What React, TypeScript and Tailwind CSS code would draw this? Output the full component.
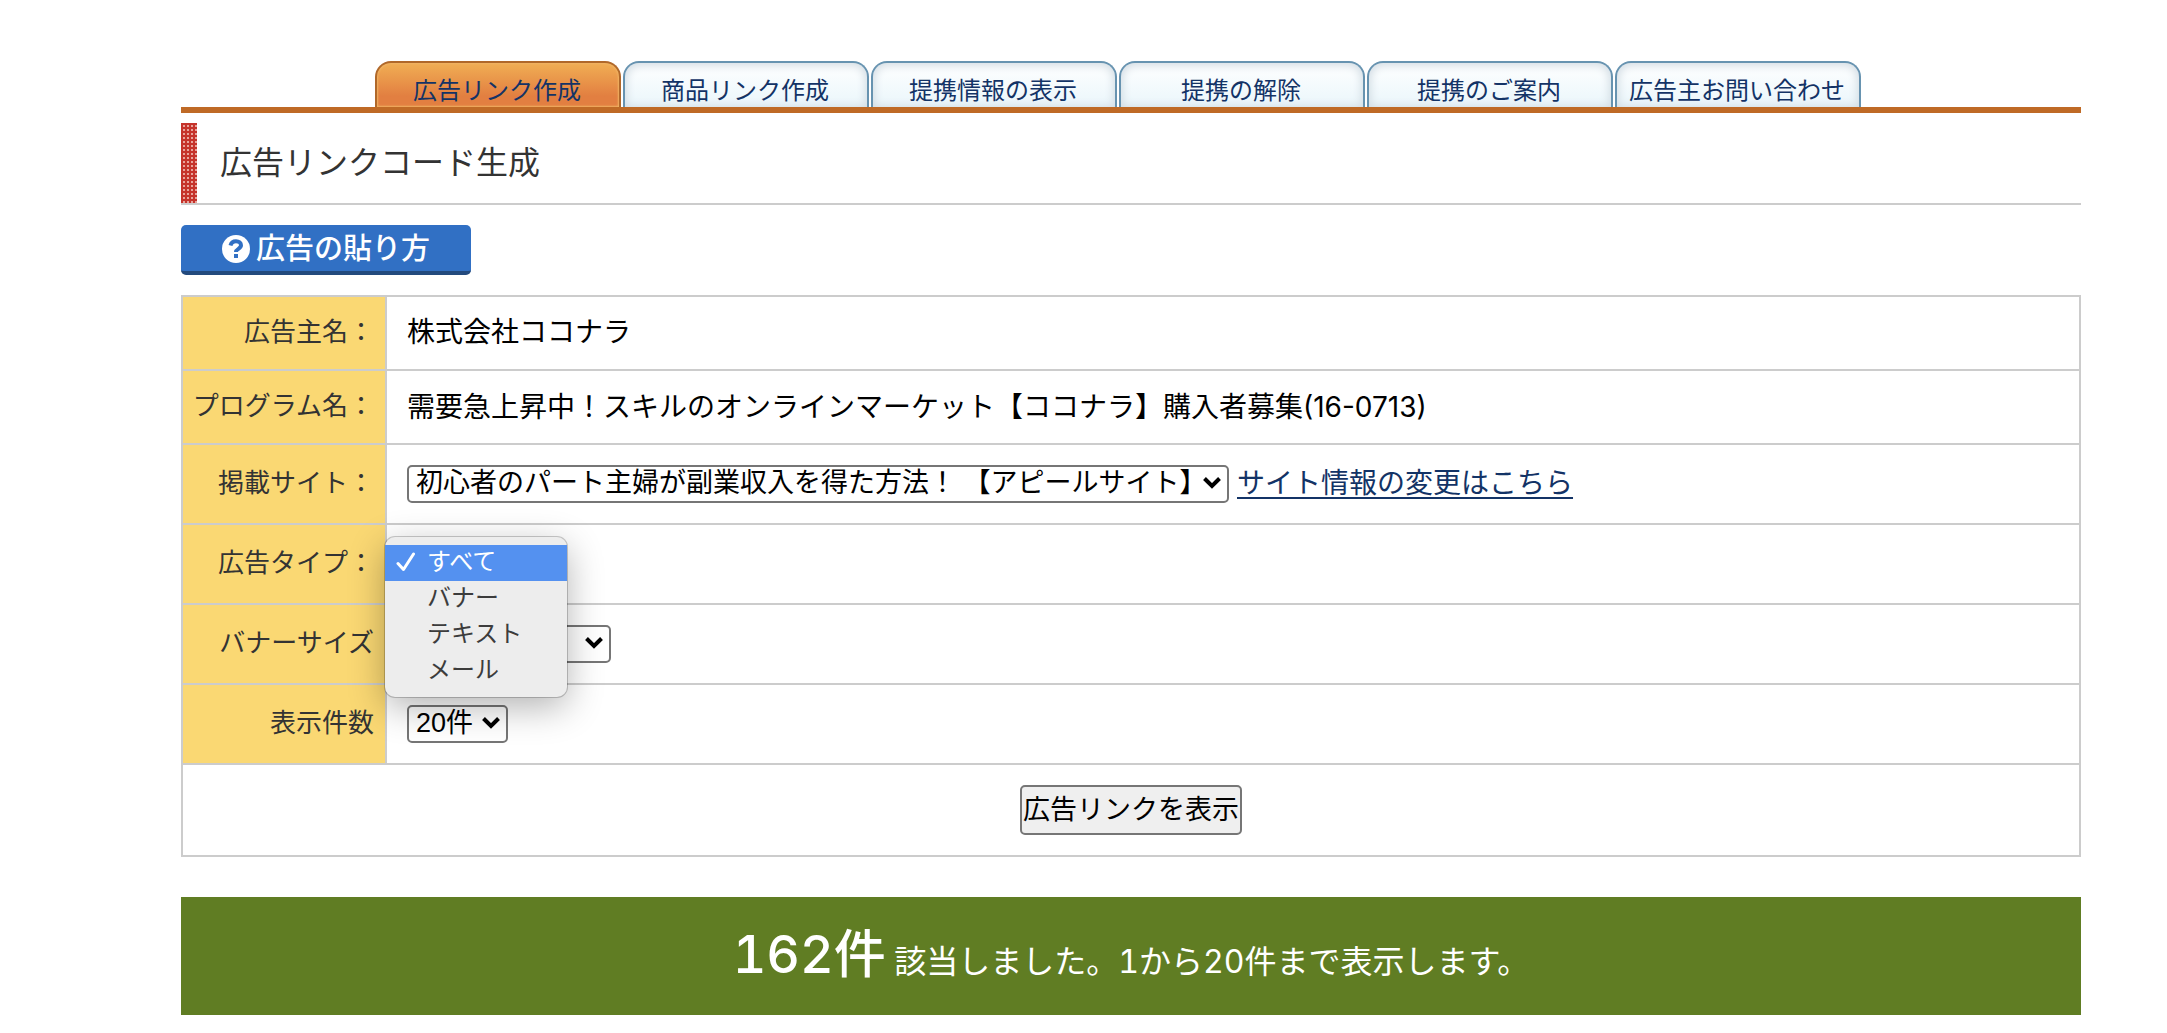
import { useState, type ReactNode } from "react";

const tabs = [
  "広告リンク作成",
  "商品リンク作成",
  "提携情報の表示",
  "提携の解除",
  "提携のご案内",
  "広告主お問い合わせ",
];

const adTypes = ["すべて", "バナー", "テキスト", "メール"];

function Tab({ label, active }: { label: string; active: boolean }) {
  const look = active
    ? "border-[#b0682a] bg-linear-to-b from-[#f0ae54] to-[#e27f41] to-75% shadow-[inset_0_0_2px_1px_#f0b464]"
    : "border-[#6793b0] bg-linear-to-b from-white to-[#eaf6fb] shadow-[inset_0_1px_8px_2px_#d3dde4]";
  return (
    <a
      href="#"
      aria-current={active ? "page" : undefined}
      className={`flex h-[46px] w-[246px] items-end justify-center rounded-t-[16px] border-2 border-b-0 pr-0.5 pb-1 text-[24px] leading-6 whitespace-nowrap text-[#133366] ${look}`}
    >
      {label}
    </a>
  );
}

function Select({
  id,
  options,
  className = "",
}: {
  id: string;
  options: string[];
  className?: string;
}) {
  return (
    <span className={`relative inline-flex ${className}`}>
      <select
        id={id}
        className="h-[38px] w-full appearance-none rounded-[5px] border-2 border-[#767676] bg-white pr-8 pb-0.5 pl-[7px] text-[27px] leading-8 text-black"
      >
        {options.map((o) => (
          <option key={o}>{o}</option>
        ))}
      </select>
      <svg
        aria-hidden="true"
        viewBox="0 0 18 12"
        className="pointer-events-none absolute top-3 right-2 h-3 w-[18px]"
      >
        <path d="M1.5 1.5 9 9l7.5-7.5" fill="none" stroke="#000" strokeWidth="4" />
      </svg>
    </span>
  );
}

function Row({
  label,
  htmlFor,
  tall,
  children,
}: {
  label: string;
  htmlFor?: string;
  tall?: boolean;
  children: ReactNode;
}) {
  return (
    <tr className={tall ? "h-20" : "h-[74px]"}>
      <th
        scope="row"
        className="w-[204px] border-2 border-[#cccccc] bg-[#fad873] pr-[11px] pb-0.5 text-right text-[26px] leading-9 font-normal whitespace-nowrap text-[#333333]"
      >
        {htmlFor ? <label htmlFor={htmlFor}>{label}</label> : label}
      </th>
      <td className="relative border-2 border-[#cccccc] px-5 text-[28px] leading-9 text-black">{children}</td>
    </tr>
  );
}

function AdTypeMenu() {
  const [selected, setSelected] = useState(0);
  return (
    <ul
      role="listbox"
      aria-label="広告タイプ"
      className="absolute top-3 -left-0.5 z-10 w-[182px] rounded-[10px] bg-[#ededed] pt-2 pb-2 shadow-[0_0_0_1px_rgba(0,0,0,0.2),0_10px_36px_rgba(0,0,0,0.3)]"
    >
      {adTypes.map((type, i) => (
        <li key={type} role="option" aria-selected={i === selected}>
          <button
            type="button"
            onClick={() => setSelected(i)}
            className={`flex h-9 w-full items-center pb-0.5 text-[24px] leading-8 ${
              i === selected ? "bg-[#5491f0] text-white" : "text-[#3c3c3c]"
            }`}
          >
            <span className="flex w-[42px] shrink-0 justify-center">
              {i === selected && (
                <svg aria-hidden="true" viewBox="0 0 20 20" className="h-5 w-5">
                  <path
                    d="M2 11.5 7.5 17.5 17.5 2"
                    fill="none"
                    stroke="#fff"
                    strokeWidth="3"
                    strokeLinecap="round"
                    strokeLinejoin="round"
                  />
                </svg>
              )}
            </span>
            {type}
          </button>
        </li>
      ))}
    </ul>
  );
}

export default function App() {
  return (
    <div className="bg-white pt-[61px] pr-[86px] pb-4 pl-[181px] font-['Liberation_Sans','Noto_Sans_CJK_JP',sans-serif]">
      <nav className="flex gap-0.5 border-b-6 border-[#bf6a26] pl-[194px]">
        {tabs.map((t, i) => (
          <Tab key={t} label={t} active={i === 0} />
        ))}
      </nav>

      <header className="mt-2.5 flex h-[82px] border-b-2 border-[#cccccc]">
        <span className="w-4 bg-[#c5332b] bg-[linear-gradient(#c5332b_2px,transparent_2px),linear-gradient(90deg,#c5332b_2px,#e8a49c_2px)] bg-size-[4px_4px]" />
        <h1 className="self-center pl-[23px] text-[32px] leading-10 text-[#333333]">広告リンクコード生成</h1>
      </header>

      <button
        type="button"
        className="mt-5 flex h-[50px] w-[290px] items-center justify-center gap-1.5 rounded-[5px] border-b-4 border-[#234a7d] bg-[#3170c4] pt-0.5 text-[29px] leading-9 font-medium text-white"
      >
        <svg aria-hidden="true" viewBox="0 0 28 28" className="h-7 w-7">
          <circle cx="14" cy="14" r="14" fill="#fff" />
          <path
            d="M8.5 10.5c.7-3 2.7-4.3 5.5-4.3 3 0 5 1.7 5 4.1 0 3.6-5 3.4-5 6.7"
            fill="none"
            stroke="#3170c4"
            strokeWidth="4"
          />
          <rect x="12" y="19" width="4" height="4" fill="#3170c4" />
        </svg>
        広告の貼り方
      </button>

      <form onSubmit={(e) => e.preventDefault()}>
        <table className="mt-5 w-full border-collapse">
          <tbody>
            <Row label="広告主名：">株式会社ココナラ</Row>
            <Row label="プログラム名：">
              <span className="font-['Inter','Noto_Sans_CJK_JP',sans-serif]">
                需要急上昇中！スキルのオンラインマーケット【ココナラ】購入者募集(16-0713)
              </span>
            </Row>
            <Row label="掲載サイト：" htmlFor="site" tall>
              <div className="flex items-center gap-2">
                <Select
                  id="site"
                  className="w-[822px]"
                  options={["初心者のパート主婦が副業収入を得た方法！ 【アピールサイト】"]}
                />
                <a href="#" className="text-[#133366] underline decoration-2 underline-offset-4">
                  サイト情報の変更はこちら
                </a>
              </div>
            </Row>
            <Row label="広告タイプ：" htmlFor="type" tall>
              <div className="flex">
                <Select id="type" options={adTypes} />
              </div>
              <AdTypeMenu />
            </Row>
            <Row label="バナーサイズ" htmlFor="size" tall>
              <div className="flex">
                <Select id="size" className="w-[204px]" options={["すべて"]} />
              </div>
            </Row>
            <Row label="表示件数" htmlFor="count" tall>
              <div className="flex">
                <Select id="count" options={["20件"]} />
              </div>
            </Row>
            <tr className="h-[92px]">
              <td colSpan={2} className="border-2 border-[#cccccc] text-center">
                <button
                  type="submit"
                  className="h-[50px] rounded-[5px] border-2 border-[#767676] bg-[#efefef] px-px text-[27px] leading-9 text-black"
                >
                  広告リンクを表示
                </button>
              </td>
            </tr>
          </tbody>
        </table>
      </form>

      <p className="mt-10 flex h-[118px] items-center justify-center bg-[#607d23] pt-1 font-['Inter','Noto_Sans_CJK_JP',sans-serif] text-white tabular-nums">
        <span className="text-[32px] leading-[60px]">
          <strong className="text-[52px] font-medium">162件</strong> 該当しました。1から20件まで表示します。
        </span>
      </p>
    </div>
  );
}
